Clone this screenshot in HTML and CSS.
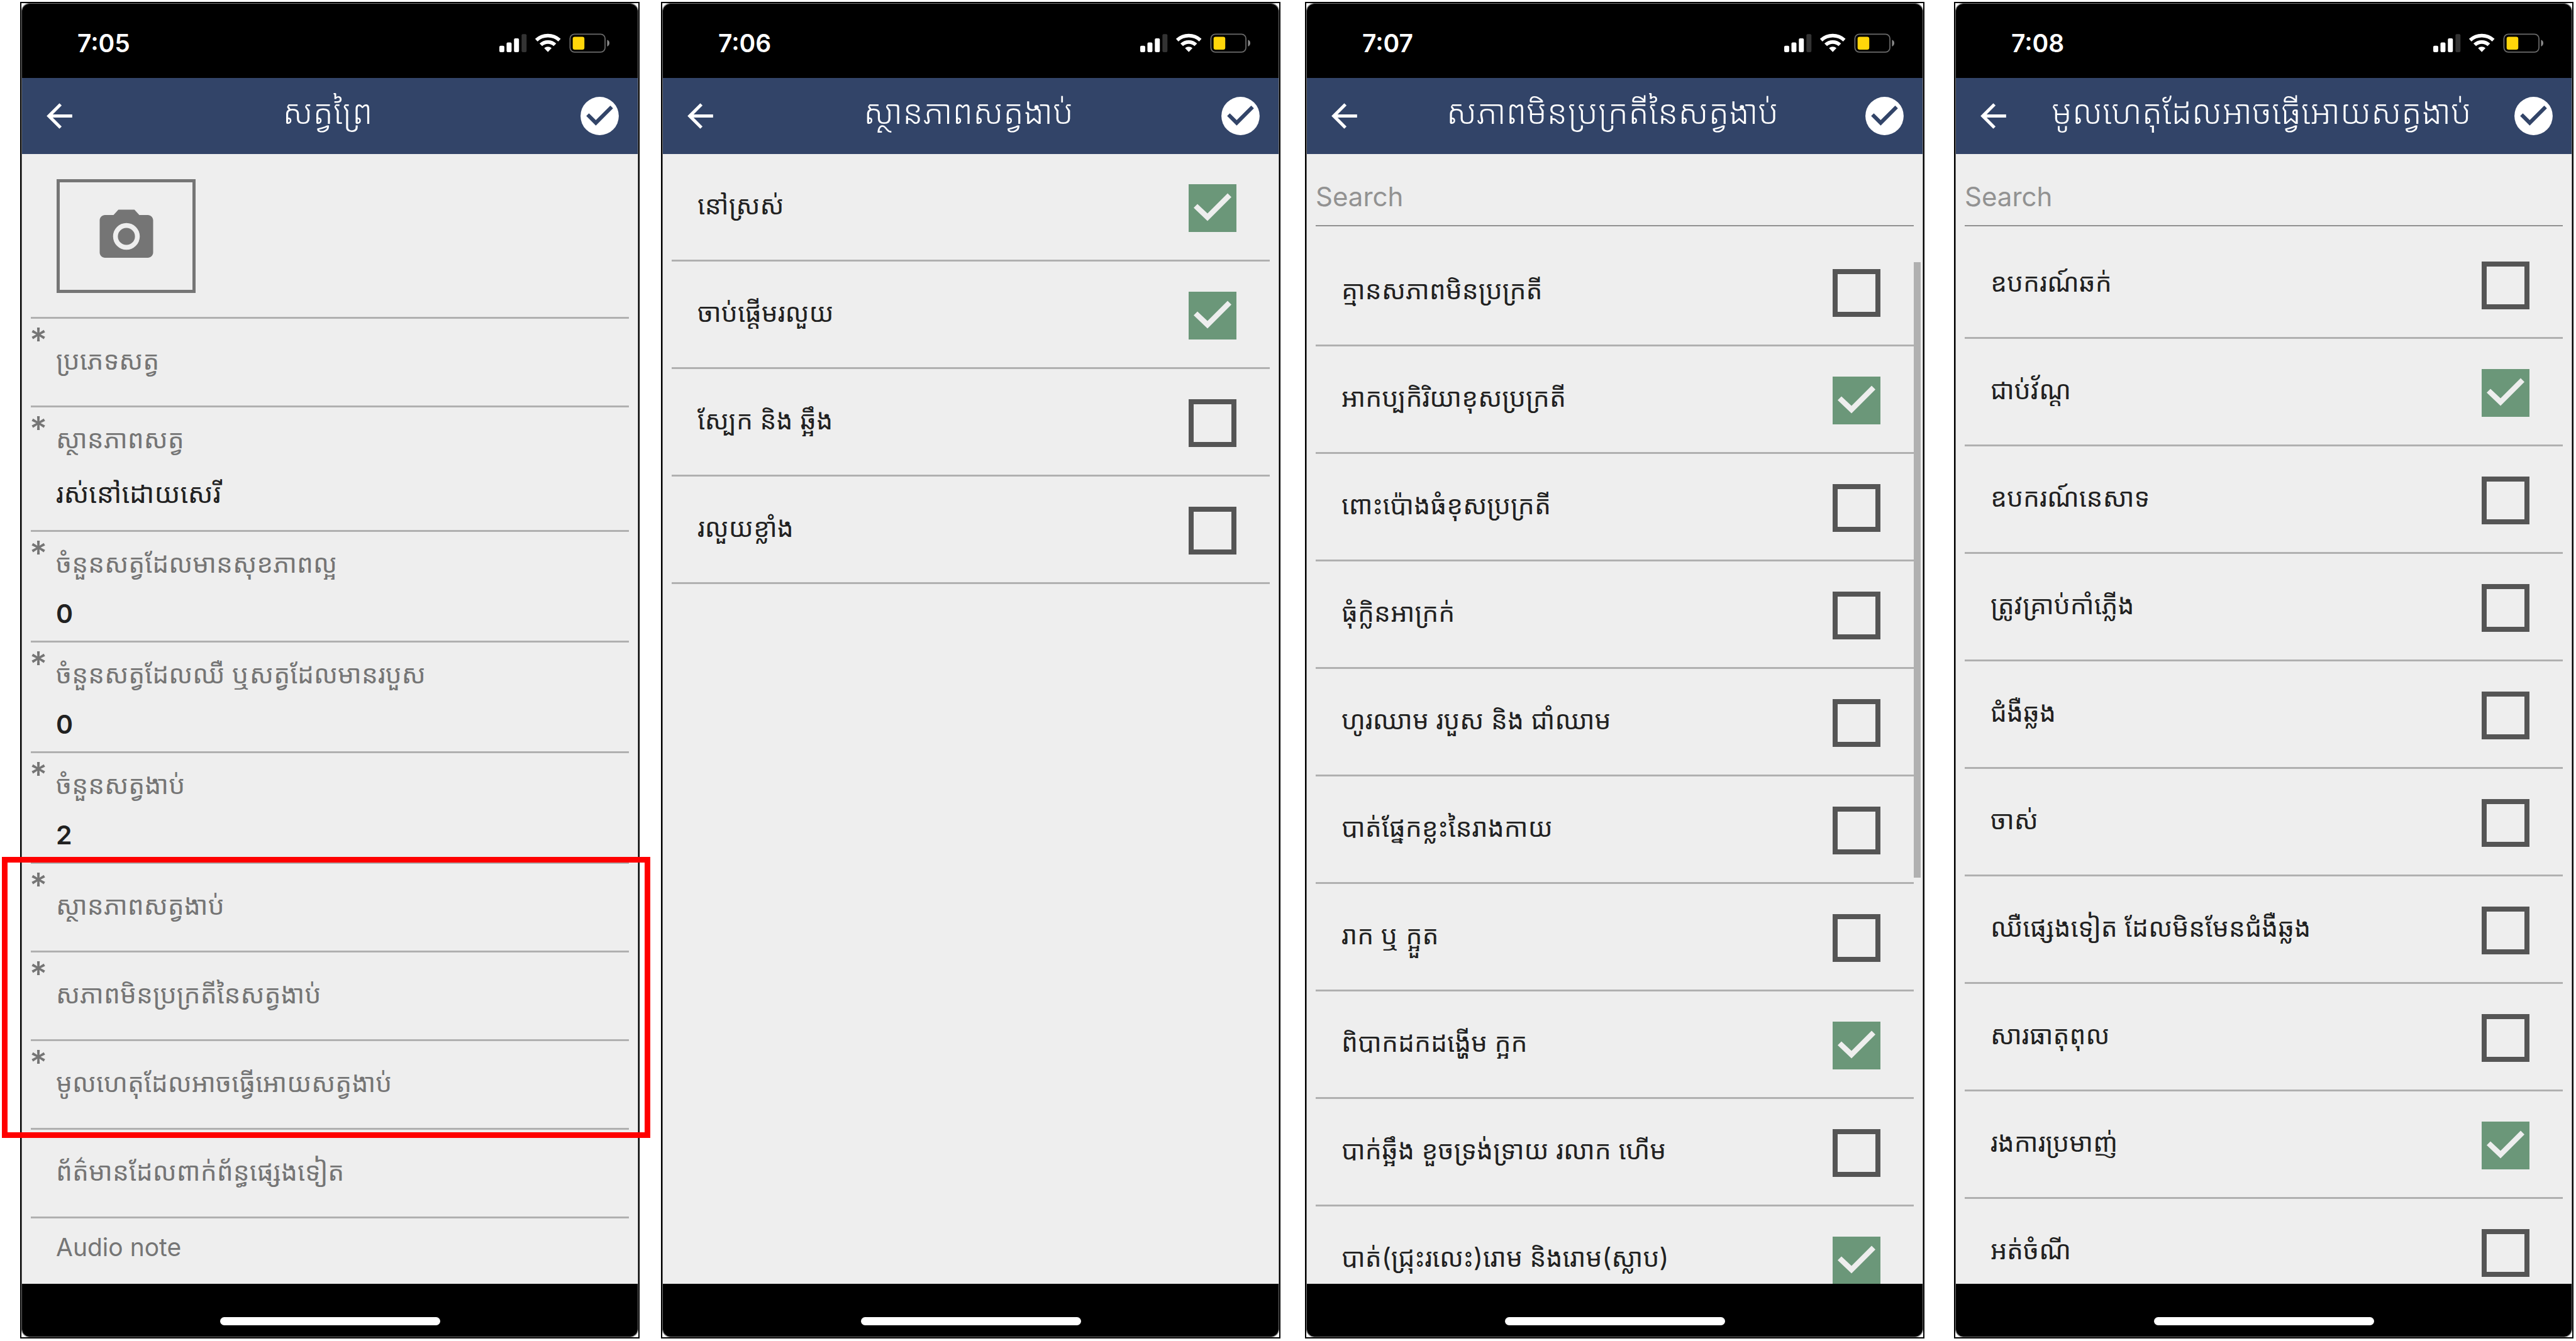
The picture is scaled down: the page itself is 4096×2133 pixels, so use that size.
FILE: index.html
```html
<!DOCTYPE html>
<html lang="km">
<head>
<meta charset="utf-8">
<meta name="viewport" content="width=device-width, initial-scale=1">
<title>សត្វព្រៃ</title>
<link rel="stylesheet" href="styles.css">
</head>
<body>
<svg class="sprite" aria-hidden="true">
  <symbol id="status-icons" viewBox="0 0 594 108">
    <rect x="0" y="70" width="27" height="35" rx="7" fill="#fff"/>
    <rect x="39" y="52" width="27" height="53" rx="7" fill="#fff"/>
    <rect x="79" y="30" width="27" height="75" rx="7" fill="#fff"/>
    <rect x="120" y="7" width="27" height="98" rx="7" fill="#333"/>
    <path d="M193 33a101 101 0 0 1 138 0l-13 14a82 82 0 0 0-112 0z" fill="#fff"/>
    <path d="M217 58a66 66 0 0 1 90 0l-14 14a45 45 0 0 0-62 0z" fill="#fff"/>
    <path d="M242 83a29 29 0 0 1 40 0l-20 21z" fill="#fff"/>
    <rect x="381.500" y="7.500" width="189" height="97" rx="24" fill="none" stroke="#6a6a6a" stroke-width="6"/>
    <rect x="396" y="22" width="63" height="69" rx="11" fill="#ffd60a"/>
    <path d="M582 38q12 5 12 18t-12 18z" fill="#8a8a8a"/>
  </symbol>
  <symbol id="back" viewBox="0 0 24 24"><path fill="#fff" d="M20 11H7.830l5.590-5.590L12 4l-8 8 8 8 1.410-1.410L7.830 13H20v-2z"/></symbol>
  <symbol id="done" viewBox="0 0 24 24"><circle cx="12" cy="12" r="10" fill="#fff"/><path fill="#324468" d="M10 17l-5-5 1.410-1.410L10 14.170l7.590-7.590L19 8z"/></symbol>
  <symbol id="camera" viewBox="0 0 24 24"><path fill="#757575" fill-rule="evenodd" d="M9 2L7.170 4H4c-1.100 0-2 .9-2 2v12c0 1.100.9 2 2 2h16c1.100 0 2-.9 2-2V6c0-1.100-.9-2-2-2h-3.170L15 2H9zm3 15a5 5 0 1 1 0-10 5 5 0 0 1 0 10z"/><circle cx="12" cy="12" r="3.200" fill="#757575"/></symbol>
</svg>

<main class="page">
  <section class="phone">
    <div class="screen">
      <div class="status"><time>7:05</time><svg class="status-icons"><use href="#status-icons"/></svg></div>
      <header class="bar">
        <button class="icon-button" aria-label="Back"><svg class="back"><use href="#back"/></svg></button>
        <h1>សត្វព្រៃ</h1>
        <button class="icon-button" aria-label="Done"><svg class="done"><use href="#done"/></svg></button>
      </header>
      <div class="content">
        <div class="photo"><button class="camera-button" aria-label="Camera"><svg><use href="#camera"/></svg></button></div>
        <button class="field"><span class="star">*</span><span class="label">ប្រភេទសត្វ</span></button>
        <button class="field filled tall"><span class="star">*</span><span class="label">ស្ថានភាពសត្វ</span><span class="value">រស់នៅដោយសេរី</span></button>
        <div class="field filled"><span class="star">*</span><label class="label" for="healthy">ចំនួនសត្វដែលមានសុខភាពល្អ</label><input class="value" id="healthy" value="0"></div>
        <div class="field filled"><span class="star">*</span><label class="label" for="sick">ចំនួនសត្វដែលឈឺ ឬសត្វដែលមានរបួស</label><input class="value" id="sick" value="0"></div>
        <div class="field filled"><span class="star">*</span><label class="label" for="dead">ចំនួនសត្វងាប់</label><input class="value" id="dead" value="2"></div>
        <div class="highlight">
          <button class="field"><span class="star">*</span><span class="label">ស្ថានភាពសត្វងាប់</span></button>
          <button class="field"><span class="star">*</span><span class="label">សភាពមិនប្រក្រតីនៃសត្វងាប់</span></button>
          <button class="field"><span class="star">*</span><span class="label">មូលហេតុដែលអាចធ្វើអោយសត្វងាប់</span></button>
        </div>
        <button class="field"><span class="label">ព័ត៌មានដែលពាក់ព័ន្ធផ្សេងទៀត</span></button>
        <button class="field audio"><span class="label">Audio note</span></button>
      </div>
      <footer class="home"><span class="indicator"></span></footer>
    </div>
  </section>

  <section class="phone">
    <div class="screen">
      <div class="status"><time>7:06</time><svg class="status-icons"><use href="#status-icons"/></svg></div>
      <header class="bar">
        <button class="icon-button" aria-label="Back"><svg class="back"><use href="#back"/></svg></button>
        <h1>ស្ថានភាពសត្វងាប់</h1>
        <button class="icon-button" aria-label="Done"><svg class="done"><use href="#done"/></svg></button>
      </header>
      <div class="content">
        <label class="option"><span>នៅស្រស់</span><input type="checkbox" checked></label>
        <label class="option"><span>ចាប់ផ្តើមរលួយ</span><input type="checkbox" checked></label>
        <label class="option"><span>ស្បែក និង ឆ្អឹង</span><input type="checkbox"></label>
        <label class="option"><span>រលួយខ្លាំង</span><input type="checkbox"></label>
      </div>
      <footer class="home"><span class="indicator"></span></footer>
    </div>
  </section>

  <section class="phone">
    <div class="screen">
      <div class="status"><time>7:07</time><svg class="status-icons"><use href="#status-icons"/></svg></div>
      <header class="bar">
        <button class="icon-button" aria-label="Back"><svg class="back"><use href="#back"/></svg></button>
        <h1>សភាពមិនប្រក្រតីនៃសត្វងាប់</h1>
        <button class="icon-button" aria-label="Done"><svg class="done"><use href="#done"/></svg></button>
      </header>
      <div class="content">
        <input class="search wide-gap" type="search" placeholder="Search" aria-label="Search">
        <label class="option"><span>គ្មានសភាពមិនប្រក្រតី</span><input type="checkbox"></label>
        <label class="option"><span>អាកប្បកិរិយាខុសប្រក្រតី</span><input type="checkbox" checked></label>
        <label class="option"><span>ពោះប៉ោងធំខុសប្រក្រតី</span><input type="checkbox"></label>
        <label class="option"><span>ធុំក្លិនអាក្រក់</span><input type="checkbox"></label>
        <label class="option"><span>ហូរឈាម របួស និង ជាំឈាម</span><input type="checkbox"></label>
        <label class="option"><span>បាត់ផ្នែកខ្លះនៃរាងកាយ</span><input type="checkbox"></label>
        <label class="option"><span>រាក ឬ ក្អួត</span><input type="checkbox"></label>
        <label class="option"><span>ពិបាកដកដង្ហើម ក្អក</span><input type="checkbox" checked></label>
        <label class="option"><span>បាក់ឆ្អឹង ខួចទ្រង់ទ្រាយ រលាក ហើម</span><input type="checkbox"></label>
        <label class="option"><span>បាត់(ជ្រុះរលេះ)រោម និងរោម(ស្លាប)</span><input type="checkbox" checked></label>
        <div class="scrollbar"></div>
      </div>
      <footer class="home"><span class="indicator"></span></footer>
    </div>
  </section>

  <section class="phone">
    <div class="screen">
      <div class="status"><time>7:08</time><svg class="status-icons"><use href="#status-icons"/></svg></div>
      <header class="bar">
        <button class="icon-button" aria-label="Back"><svg class="back"><use href="#back"/></svg></button>
        <h1>មូលហេតុដែលអាចធ្វើអោយសត្វងាប់</h1>
        <button class="icon-button" aria-label="Done"><svg class="done"><use href="#done"/></svg></button>
      </header>
      <div class="content">
        <input class="search" type="search" placeholder="Search" aria-label="Search">
        <label class="option"><span>ឧបករណ៍ឆក់</span><input type="checkbox"></label>
        <label class="option"><span>ជាប់វ័ណ្ត</span><input type="checkbox" checked></label>
        <label class="option"><span>ឧបករណ៍នេសាទ</span><input type="checkbox"></label>
        <label class="option"><span>ត្រូវគ្រាប់កាំភ្លើង</span><input type="checkbox"></label>
        <label class="option"><span>ជំងឺឆ្លង</span><input type="checkbox"></label>
        <label class="option"><span>ចាស់</span><input type="checkbox"></label>
        <label class="option"><span>ឈឺផ្សេងទៀត ដែលមិនមែនជំងឺឆ្លង</span><input type="checkbox"></label>
        <label class="option"><span>សារធាតុពុល</span><input type="checkbox"></label>
        <label class="option"><span>រងការប្រមាញ់</span><input type="checkbox" checked></label>
        <label class="option"><span>អត់ចំណី</span><input type="checkbox"></label>
      </div>
      <footer class="home"><span class="indicator"></span></footer>
    </div>
  </section>
</main>
</body>
</html>
```
FILE: styles.css
```css
* { box-sizing: border-box; }

body {
  margin: 0;
  background: #fff;
  color: #212121;
  font-family: Inter, "Noto Sans Khmer", "Khmer OS", sans-serif;
  font-size: 41px;
}

button, input { font: inherit; color: inherit; border: 0; background: none; padding: 0; margin: 0; }
.sprite { display: none; }

.page {
  display: flex;
  height: 100vh;
  padding: 3px 4px 4px 32px;
}

.phone {
  flex: 1 1 0;
  min-width: 0;
  display: flex;
  border: 2px solid #000;
}
.phone + .phone { margin-left: 34px; }
.phone:nth-child(3) { margin-left: 39px; }
.phone:nth-child(4) { margin-left: 47px; }

.screen {
  flex: 1;
  min-width: 0;
  display: flex;
  flex-direction: column;
  border: 1px solid #777;
  border-radius: 12px;
  background: #eee;
}

.status {
  flex: none;
  display: flex;
  align-items: center;
  justify-content: space-between;
  height: 118px;
  padding: 6px 45px 0 88px;
  background: #000;
  border-radius: 12px 12px 0 0;
  color: #fff;
  font-size: 39px;
  font-weight: 600;
}
.status-icons { width: 175px; height: 32px; }

.bar {
  flex: none;
  display: flex;
  align-items: center;
  justify-content: space-between;
  height: 121px;
  padding: 0 24px 0 29px;
  background: #324468;
  color: #fff;
}
.bar h1 { margin: 0; padding-bottom: 14px; font-size: 53px; font-weight: 300; line-height: 80px; white-space: nowrap; }
.icon-button { display: flex; }
.back { width: 61px; height: 61px; }
.done { width: 73px; height: 73px; }

.content {
  flex: 1;
  min-height: 0;
  position: relative;
  overflow: hidden;
  padding: 0 14px;
}

.photo { height: 262px; padding: 40px 41px 0; border-bottom: 3px solid #b0b0b0; }
.camera-button {
  display: flex;
  align-items: center;
  justify-content: center;
  width: 221px;
  height: 181px;
  border: 5px solid #757575;
}
.camera-button svg { width: 102px; height: 102px; }

.field {
  display: grid;
  grid-template-columns: 40px 1fr;
  grid-template-rows: 60px;
  align-content: start;
  width: 100%;
  height: 141px;
  padding-top: 36px;
  border-bottom: 3px solid #b0b0b0;
  text-align: left;
}
.star { grid-column: 1; margin-top: -32px; margin-left: -2px; font-size: 54px; font-weight: 500; line-height: 60px; color: #757575; }
.label { grid-column: 2; grid-row: 1; line-height: 60px; color: #757575; white-space: nowrap; }
.value { grid-column: 2; grid-row: 2; width: 100%; height: 60px; line-height: 60px; font-weight: 600; outline: 0; }
.field.filled { grid-template-rows: 60px 60px; row-gap: 20px; height: 176px; padding-top: 20px; }
.filled .star { margin-top: -16px; }
.field.tall { height: 198px; row-gap: 26px; }
.tall .value { font-size: 43px; font-weight: 400; }
.field.audio { padding-top: 16px; border: 0; }
.audio .label { font-size: 39px; }

.highlight { position: relative; }
.content:has(.highlight) { overflow: visible; }
.highlight::after {
  content: "";
  position: absolute;
  inset: -11px -34px -13px -46px;
  border: 9px solid #f00;
  pointer-events: none;
}

.option {
  display: flex;
  align-items: center;
  justify-content: space-between;
  height: 171px;
  padding: 3px 53px 0 41px;
  border-bottom: 3px solid #b0b0b0;
  white-space: nowrap;
}
.option span { padding-bottom: 9px; line-height: 60px; }
.option input {
  appearance: none;
  flex: none;
  width: 76px;
  height: 76px;
  border: 8px solid #555;
}
.option input:checked { border: 0; background: #6b9779; }
.option input:checked::before {
  content: "";
  display: block;
  height: 76px;
  background: #eee;
  clip-path: polygon(30px 59px, 8px 38px, 14px 32px, 30px 47px, 62px 15px, 68px 21px);
}

.search {
  display: block;
  appearance: none;
  width: 100%;
  height: 115px;
  padding-top: 22px;
  margin-bottom: 8px;
  border-bottom: 2px solid #909090;
  border-radius: 0;
  font-size: 42px;
  outline: 0;
}
.search::placeholder { color: #929292; opacity: 1; }
.search.wide-gap { margin-bottom: 20px; }

.scrollbar {
  position: absolute;
  top: 172px;
  right: 3px;
  width: 11px;
  height: 979px;
  background: #b0b0b0;
}

.home {
  flex: none;
  display: flex;
  justify-content: center;
  align-items: flex-start;
  height: 84px;
  padding-top: 53px;
  background: #000;
  border-radius: 0 0 12px 12px;
}
.indicator { width: 350px; height: 13px; border-radius: 7px; background: #fff; }
```
